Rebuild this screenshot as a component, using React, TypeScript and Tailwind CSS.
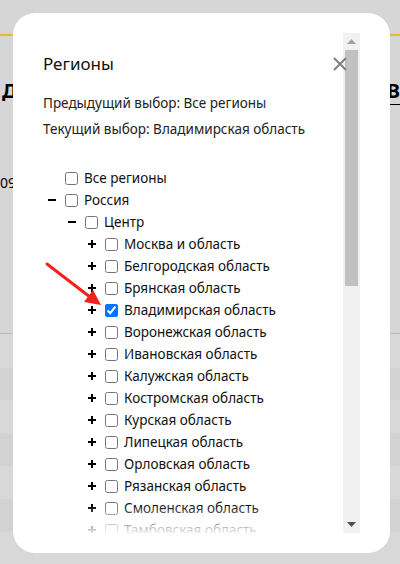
import React from "react";

type Row = { label: string; level: number; toggle: "plus" | "minus" | "none"; checked?: boolean };

const rows: Row[] = [
  { label: "Все регионы", level: 0, toggle: "none" },
  { label: "Россия", level: 0, toggle: "minus" },
  { label: "Центр", level: 1, toggle: "minus" },
  { label: "Москва и область", level: 2, toggle: "plus" },
  { label: "Белгородская область", level: 2, toggle: "plus" },
  { label: "Брянская область", level: 2, toggle: "plus" },
  { label: "Владимирская область", level: 2, toggle: "plus", checked: true },
  { label: "Воронежская область", level: 2, toggle: "plus" },
  { label: "Ивановская область", level: 2, toggle: "plus" },
  { label: "Калужская область", level: 2, toggle: "plus" },
  { label: "Костромская область", level: 2, toggle: "plus" },
  { label: "Курская область", level: 2, toggle: "plus" },
  { label: "Липецкая область", level: 2, toggle: "plus" },
  { label: "Орловская область", level: 2, toggle: "plus" },
  { label: "Рязанская область", level: 2, toggle: "plus" },
  { label: "Смоленская область", level: 2, toggle: "plus" },
  { label: "Тамбовская область", level: 2, toggle: "plus" },
];

const padByLevel = ["pl-[5px]", "pl-[25px]", "pl-[45px]"];

function Toggle({ kind }: { kind: Row["toggle"] }) {
  return (
    <span className="w-[8px] h-[8px] flex items-center justify-center shrink-0">
      {kind !== "none" && (
        <svg width="8" height="8" viewBox="0 0 8 8">
          <rect x="0" y="3" width="8" height="2" fill="#000" />
          {kind === "plus" && <rect x="3" y="0" width="2" height="8" fill="#000" />}
        </svg>
      )}
    </span>
  );
}

export default function App() {
  return (
    <div
      className="relative w-[400px] h-[564px] overflow-hidden bg-[#d6d6d6] text-[#000]"
      style={{ fontFamily: '"Noto Sans", "Open Sans", sans-serif' }}
    >
      {/* background page */}
      <div className="h-[36px] border-b-2 border-[#e3b634]" />
      <div className="mt-[42px] flex justify-between items-start h-[28px]">
        <span className="text-[20px] font-bold leading-[26px] pl-[2px]">Д</span>
        <span className="text-[20px] font-bold leading-[26px] border-b border-black">В</span>
      </div>
      <div className="mt-[67px] text-[14px] leading-[20px]">0947</div>
      <div className="mt-[140px] h-[1px] bg-[#b9b9b9]" />
      <div className="h-[34px] bg-[#d8d8d8]" />
      <div className="h-[32px] bg-[#d2d2d2]" />
      <div className="h-[33px] bg-[#d8d8d8]" />
      <div className="h-[33px] bg-[#d2d2d2]" />
      <div className="h-[33px] bg-[#d8d8d8]" />
      <div className="h-[33px] bg-[#d2d2d2]" />
      <div className="h-[33px] bg-[#d8d8d8]" />

      {/* modal */}
      <div className="absolute left-[13px] top-[13px] w-[377px] h-[540px] bg-white rounded-[22px] flex pt-[20px] pb-[20px] pr-[30px]">
        <div className="relative flex-1 overflow-hidden pl-[30px]">
          <div className="pt-[19px] text-[17px] leading-[24px] text-[#111]">Регионы</div>
          <div className="mt-[17px] text-[13.5px] leading-[20px] text-[#222]">Предыдущий выбор: Все регионы</div>
          <div className="mt-[6px] text-[13.5px] leading-[20px] text-[#222]">Текущий выбор: Владимирская область</div>
          <div className="mt-[28px] flex flex-col">
            {rows.map((r) => (
              <label
                key={r.label}
                className={`h-[22px] flex items-center ${padByLevel[r.level]} text-[13.5px] leading-[20px] text-[#111]`}
              >
                <Toggle kind={r.toggle} />
                <input
                  type="checkbox"
                  defaultChecked={!!r.checked}
                  className="m-0 ml-[9px] w-[13px] h-[13px] shrink-0"
                />
                <span className="ml-[6px] whitespace-nowrap">{r.label}</span>
              </label>
            ))}
          </div>
          <div className="absolute left-0 right-0 bottom-0 h-[28px] bg-gradient-to-b from-white/0 to-white/90" />
        </div>
        <div className="w-[17px] bg-[#f1f1f1] flex flex-col items-center shrink-0">
          <div className="h-[17px] flex items-center justify-center">
            <svg width="9" height="5" viewBox="0 0 9 5">
              <polygon points="0,5 9,5 4.5,0" fill="#a3a3a3" />
            </svg>
          </div>
          <div className="w-[13px] h-[236px] bg-[#c1c1c1]" />
          <div className="flex-1" />
          <div className="h-[17px] flex items-center justify-center">
            <svg width="9" height="5" viewBox="0 0 9 5">
              <polygon points="0,0 9,0 4.5,5" fill="#505050" />
            </svg>
          </div>
        </div>
        <button className="absolute top-[44px] right-[43px] w-[14px] h-[14px] p-0">
          <svg width="14" height="14" viewBox="0 0 14 14">
            <path d="M1 1 L13 13 M13 1 L1 13" stroke="#7f7f7f" strokeWidth="2" />
          </svg>
        </button>
      </div>

      {/* red arrow annotation */}
      <svg className="absolute left-0 top-0 pointer-events-none" width="400" height="564">
        <line x1="47" y1="264" x2="90" y2="297" stroke="#f3201c" strokeWidth="3" strokeLinecap="round" />
        <polygon points="101,305 84,302 93,290" fill="#f3201c" />
      </svg>
    </div>
  );
}
